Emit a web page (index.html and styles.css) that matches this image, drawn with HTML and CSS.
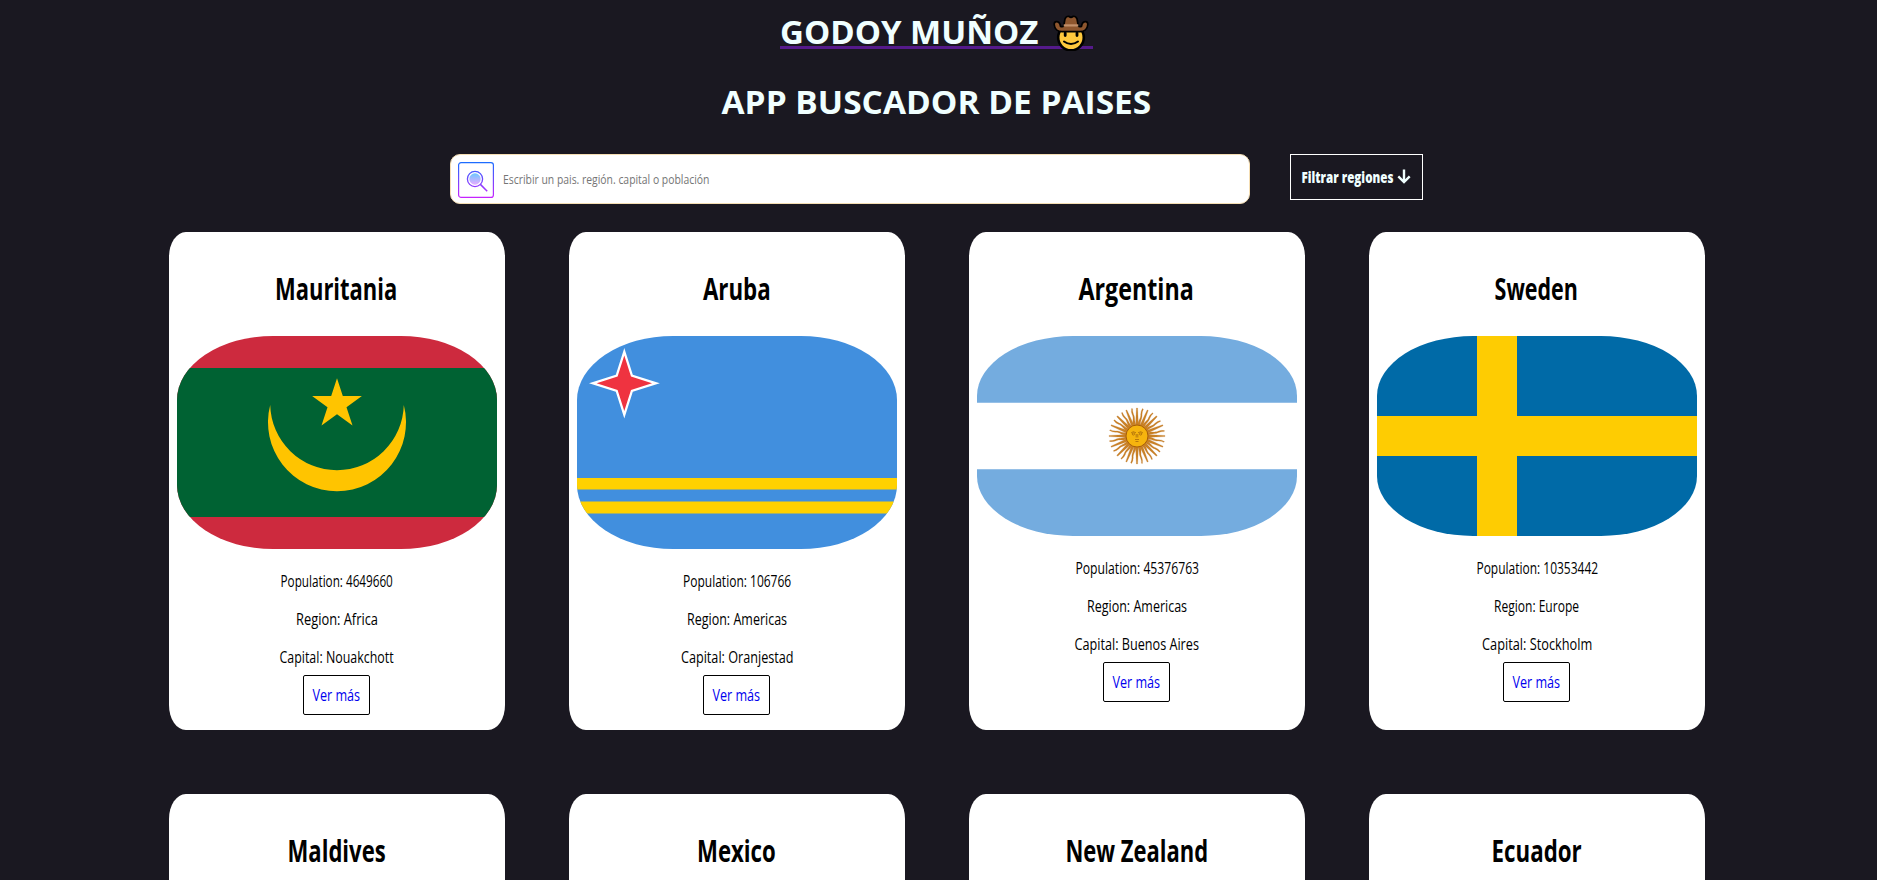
FILE: index.html
```
<!DOCTYPE html>
<html lang="es">
<head>
<meta charset="utf-8">
<title>App buscador de paises</title>
<link rel="stylesheet" href="styles.css">
</head>
<body>
<header class="header">
  <a class="brand" href="#"><span class="brand-text"><span class="fit" data-width="258">GODOY MUÑOZ</span></span><svg class="cowboy" viewBox="0 0 36 36">
    <circle cx="18" cy="22.500" r="12.800" fill="#ffc83d" stroke="#000" stroke-width="2.600"/>
    <path d="M1.200 9.500C1 6 5.500 5.500 7 9.200L7.600 11.500Q10 12 10.700 11L12 3.800Q13.200 1 16 1.300Q18 3.200 20 1.300Q22.800 1 24 3.800L25.300 11Q26 12 28.400 11.500L29 9.200C30.500 5.500 35 6 34.800 9.500C34.500 14 31 16.600 27 16.600H9C5 16.600 1.500 14 1.200 9.500Z" fill="#8e562e" stroke="#000" stroke-width="1.700"/>
    <path d="M10.700 9.300H25.300V11.500H10.700Z" fill="#c3906a"/>
    <path d="M12.200 18V20.500M24 18V20.500" stroke="#000" stroke-width="2.800" stroke-linecap="round"/>
    <path d="M11 26.500Q18 31.500 25 26.500" fill="none" stroke="#000" stroke-width="2" stroke-linecap="round"/>
  </svg></a>
  <h1 class="heading"><span class="fit" data-width="430">APP BUSCADOR DE PAISES</span></h1>
</header>

<div class="toolbar">
  <div class="search">
    <svg class="search-icon" viewBox="0 0 36 36">
      <defs>
        <linearGradient id="frame" gradientUnits="userSpaceOnUse" x1="0" y1="0" x2="0" y2="36"><stop offset="0" stop-color="#1a6dff"/><stop offset="1" stop-color="#c822ff"/></linearGradient>
        <linearGradient id="lens" x1="0" y1="0" x2="0" y2="1"><stop offset="0" stop-color="#6dc7ff"/><stop offset="1" stop-color="#e6abff"/></linearGradient>
      </defs>
      <rect x=".6" y=".6" width="34.800" height="34.800" rx="2.500" fill="none" stroke="url(#frame)" stroke-width="1.200"/>
      <circle cx="17" cy="17" r="5.700" fill="url(#lens)"/>
      <circle cx="17" cy="17" r="7.600" fill="none" stroke="url(#frame)" stroke-width="1.300"/>
      <path d="M22.400 22.400L29.200 29.200" stroke="url(#frame)" stroke-width="1.500"/>
    </svg>
    <span class="placeholder fit" data-width="206">Escribir un pais. región. capital o población</span>
  </div>
  <button class="filter"><span class="filter-text"><span class="fit" data-width="92">Filtrar regiones</span></span><svg class="arrow" viewBox="0 0 14 15"><path d="M7 .5V13M1.300 7.300L7 13L12.700 7.300" fill="none" stroke="#f0ffff" stroke-width="2.400"/></svg></button>
</div>

<main class="cards">
  <article class="card">
    <h2 class="name"><span class="fit" data-width="122">Mauritania</span></h2>
    <svg class="flag flag-tall" viewBox="0 0 320 213">
      <path fill="#cd2a3e" d="M0 0H320V213H0Z"/><path fill="#006233" d="M0 32H320V181H0Z"/>
      <path fill="#ffc400" d="M160 42.200L165.800 60H184.900L169.500 71.200L175.500 89.500L160 78.300L144.500 89.500L150.500 71.200L135.100 60H154.200Z"/>
      <path fill="#ffc400" d="M93.200 69A69 69 0 1 0 226.800 69A66.820 66.820 0 0 1 93.200 69Z"/>
    </svg>
    <div class="facts">
      <p class="fact"><span class="fit" data-width="112">Population: 4649660</span></p>
      <p class="fact"><span class="fit" data-width="82">Region: Africa</span></p>
      <p class="fact"><span class="fit" data-width="114">Capital: Nouakchott</span></p>
    </div>
    <a class="more" href="#"><span class="fit" data-width="48">Ver más</span></a>
  </article>

  <article class="card">
    <h2 class="name"><span class="fit" data-width="68">Aruba</span></h2>
    <svg class="flag flag-tall" viewBox="0 0 320 213">
      <path fill="#418fde" d="M0 0H320V213H0Z"/>
      <path fill="#ffd100" d="M0 142H320V153.600H0ZM0 165.600H320V177.400H0Z"/>
      <path fill="#fff" d="M47.300 12L55.800 38.800L82.800 47.300L55.800 55.800L47.300 82.600L38.800 55.800L12 47.300L38.800 38.800Z"/>
      <path fill="#ef3340" d="M47.300 19.500L54 40.600L75 47.300L54 54L47.300 75L40.600 54L19.600 47.300L40.600 40.600Z"/>
    </svg>
    <div class="facts">
      <p class="fact"><span class="fit" data-width="108">Population: 106766</span></p>
      <p class="fact"><span class="fit" data-width="100">Region: Americas</span></p>
      <p class="fact"><span class="fit" data-width="113">Capital: Oranjestad</span></p>
    </div>
    <a class="more" href="#"><span class="fit" data-width="48">Ver más</span></a>
  </article>

  <article class="card">
    <h2 class="name"><span class="fit" data-width="115">Argentina</span></h2>
    <svg class="flag" viewBox="0 0 320 200">
      <defs>
        <g id="rays1">
          <path d="M-1.500 -10L-.6 -28H.6L1.500 -10Z"/>
          <path d="M-1.400 -10C-2 -16 .6 -18 -.6 -22Q-1.200 -25 0 -28L1 -27.600Q.2 -25 .8 -22C2 -18 0 -16 1.400 -10Z" transform="rotate(11.250)"/>
        </g>
        <g id="rays2"><use href="#rays1"/><use href="#rays1" transform="rotate(22.500)"/></g>
        <g id="rays4"><use href="#rays2"/><use href="#rays2" transform="rotate(45)"/></g>
        <g id="rays8"><use href="#rays4"/><use href="#rays4" transform="rotate(90)"/></g>
      </defs>
      <path fill="#fff" d="M0 0H320V200H0Z"/>
      <path fill="#74acdf" d="M0 0H320V66.670H0ZM0 133.330H320V200H0Z"/>
      <g transform="translate(160 100)">
        <g fill="#c98125" stroke="#b9712b" stroke-width=".2"><use href="#rays8"/><use href="#rays8" transform="rotate(180)"/></g>
        <circle r="11" fill="#f6b40e" stroke="#a55d0b" stroke-width="1"/>
        <g fill="none" stroke="#a8690b" stroke-width=".8">
          <path d="M-6 -3Q-4 -5.500 -1 -3.200M6 -3Q4 -5.500 1 -3.200M-.8 -2V1.500M.8 -2V1.500M-2 3.500H2M-1.500 5.500H1.500"/>
          <circle cx="-3.600" cy="-2" r="1.100"/><circle cx="3.600" cy="-2" r="1.100"/>
        </g>
      </g>
    </svg>
    <div class="facts">
      <p class="fact"><span class="fit" data-width="124">Population: 45376763</span></p>
      <p class="fact"><span class="fit" data-width="100">Region: Americas</span></p>
      <p class="fact"><span class="fit" data-width="124">Capital: Buenos Aires</span></p>
    </div>
    <a class="more" href="#"><span class="fit" data-width="48">Ver más</span></a>
  </article>

  <article class="card">
    <h2 class="name"><span class="fit" data-width="83">Sweden</span></h2>
    <svg class="flag" viewBox="0 0 320 200">
      <path fill="#006aa7" d="M0 0H320V200H0Z"/><path fill="#fecc02" d="M100 0H140V80H320V120H140V200H100V120H0V80H100Z"/>
    </svg>
    <div class="facts">
      <p class="fact"><span class="fit" data-width="122">Population: 10353442</span></p>
      <p class="fact"><span class="fit" data-width="85">Region: Europe</span></p>
      <p class="fact"><span class="fit" data-width="110">Capital: Stockholm</span></p>
    </div>
    <a class="more" href="#"><span class="fit" data-width="48">Ver más</span></a>
  </article>

  <article class="card"><h2 class="name"><span class="fit" data-width="98">Maldives</span></h2></article>
  <article class="card"><h2 class="name"><span class="fit" data-width="79">Mexico</span></h2></article>
  <article class="card"><h2 class="name"><span class="fit" data-width="143">New Zealand</span></h2></article>
  <article class="card"><h2 class="name"><span class="fit" data-width="90">Ecuador</span></h2></article>
</main>
<script src="fit.js"></script>
</body>
</html>
```
FILE: styles.css
```
* { box-sizing: border-box; }
html { background: #1a1821; }
body {
  margin: 0 3px 0 0;
  height: 880px;
  overflow: hidden;
  background: #1a1821;
  color: #000;
  font-family: "Open Sans", "Noto Sans", sans-serif;
}
.fit { display: inline-block; white-space: nowrap; }

.header { display: flex; flex-direction: column; align-items: center; padding: 10px 1px 0 0; }
.brand {
  display: flex;
  width: 313px;
  height: 44px;
  color: azure;
  font-size: 32px;
  font-weight: 700;
  line-height: 44px;
  text-decoration: none;
  background: linear-gradient(#551a8b, #551a8b) 0 36px / 100% 3px no-repeat;
}
.brand-text { display: flex; justify-content: center; width: 259px; }
.cowboy { flex: none; width: 36px; height: 36px; margin: 5px 0 0 14px; }
.heading {
  display: flex;
  justify-content: center;
  margin: 26px 0 0;
  color: azure;
  font-size: 32px;
  font-weight: 700;
  line-height: 44px;
}

.toolbar { display: flex; justify-content: center; align-items: flex-start; gap: 40px; margin-top: 30px; padding-right: 1px; }
.search {
  display: flex;
  align-items: center;
  width: 800px;
  height: 50px;
  padding-left: 7px;
  border: 1px solid #f5deb3;
  border-radius: 10px;
  background: #fff;
}
.search-icon { flex: none; width: 36px; height: 36px; margin-top: 2px; }
.placeholder { margin: 2px 0 0 9px; color: #757575; font-size: 12.5px; line-height: 20px; transform-origin: left center; }
.filter {
  display: flex;
  align-items: center;
  width: 133px;
  height: 46px;
  padding: 0 0 0 10px;
  border: 1px solid #fff;
  background: transparent;
  color: azure;
  font: 800 15px/22px "Open Sans", "Noto Sans", sans-serif;
}
.filter-text { display: flex; justify-content: center; width: 92px; }
.arrow { flex: none; width: 14px; height: 15px; margin: -2px 0 0 4px; }

.cards { display: grid; grid-template-columns: repeat(4, 336px); gap: 64px; justify-content: center; margin-top: 28px; }
.card {
  display: flex;
  flex-direction: column;
  align-items: center;
  height: 498px;
  padding: 9px 8px 0;
  border-radius: 5%;
  background: #fff;
}
.name { display: flex; justify-content: center; margin: 0 1px 0 0; font-size: 29.5px; font-weight: 700; line-height: 95px; }
.flag { flex: none; width: 320px; height: 200px; border-radius: 30%; }
.flag-tall { height: 213px; }
.facts { padding-top: 13px; }
.fact { display: flex; justify-content: center; margin: 0; font-size: 16px; line-height: 38px; }
.more {
  display: flex;
  justify-content: center;
  width: 67px;
  height: 40px;
  margin: -1px 1px 0 0;
  border: 1px solid #000;
  border-radius: 2px;
  color: #00e;
  font-size: 16px;
  line-height: 38px;
  text-decoration: none;
}
```
FILE: fit.js
```
// Condense each label horizontally to its own measure.
document.querySelectorAll(".fit").forEach((el) => {
  el.style.transform = `scaleX(${Number(el.dataset.width) / el.offsetWidth})`;
});
```
